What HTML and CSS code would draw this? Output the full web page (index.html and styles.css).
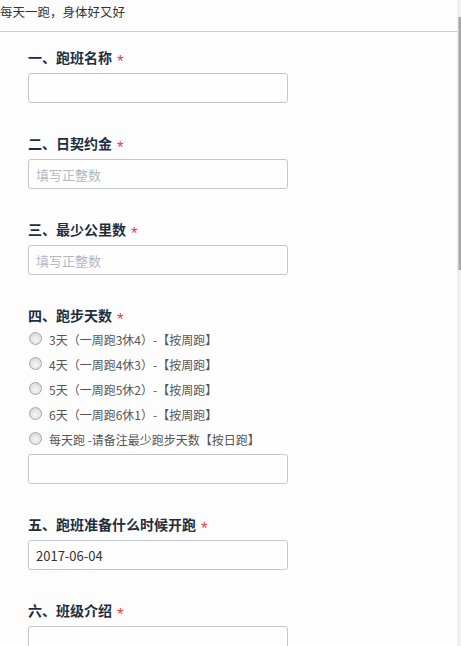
FILE: index.html
```html
<!DOCTYPE html>
<html lang="zh-CN">
<head>
<meta charset="utf-8">
<title>每天一跑</title>
<link rel="stylesheet" href="styles.css">
</head>
<body>
<div class="page">
  <header class="topbar">每天一跑，身体好又好</header>
  <form class="form">
    <div class="field">
      <div class="field-label">一、跑班名称<span class="req">*</span></div>
      <input class="text-input" type="text">
    </div>
    <div class="field">
      <div class="field-label">二、日契约金<span class="req">*</span></div>
      <input class="text-input" type="text" placeholder="填写正整数">
    </div>
    <div class="field">
      <div class="field-label">三、最少公里数<span class="req">*</span></div>
      <input class="text-input" type="text" placeholder="填写正整数">
    </div>
    <div class="field field--choice">
      <div class="field-label">四、跑步天数<span class="req">*</span></div>
      <div class="options">
        <label class="option"><input class="radio" type="radio" name="days"><span>3天（一周跑3休4）-【按周跑】</span></label>
        <label class="option"><input class="radio" type="radio" name="days"><span>4天（一周跑4休3）-【按周跑】</span></label>
        <label class="option"><input class="radio" type="radio" name="days"><span>5天（一周跑5休2）-【按周跑】</span></label>
        <label class="option"><input class="radio" type="radio" name="days"><span>6天（一周跑6休1）-【按周跑】</span></label>
        <label class="option"><input class="radio" type="radio" name="days"><span>每天跑 -请备注最少跑步天数【按日跑】</span></label>
      </div>
      <input class="text-input" type="text">
    </div>
    <div class="field">
      <div class="field-label">五、跑班准备什么时候开跑<span class="req">*</span></div>
      <input class="text-input" type="text" value="2017-06-04">
    </div>
    <div class="field">
      <div class="field-label">六、班级介绍<span class="req">*</span></div>
      <textarea class="text-area"></textarea>
    </div>
  </form>
  <div class="scrollbar" aria-hidden="true"><div class="scrollbar-thumb"></div></div>
</div>
</body>
</html>
```
FILE: styles.css
```css
html {
  background: #fdfdfd;
}
body {
  margin: 0;
  font-family: "Noto Sans CJK SC", "Noto Sans", sans-serif;
  color: #333;
}
.page {
  overflow: hidden;
}
.topbar {
  height: 31px;
  line-height: 23px;
  font-size: 12.5px;
  color: #333;
  border-bottom: 1px solid #c7cbd4;
  white-space: nowrap;
}
.form {
  padding: 15px 0 0 28px;
}
.field {
  margin-bottom: 30px;
}
.field-label {
  height: 20px;
  font-size: 14px;
  font-weight: bold;
  line-height: 20px;
  color: #1f2d3d;
  margin-bottom: 6px;
}
.req {
  color: #f23c3c;
  font-family: "Liberation Sans", sans-serif;
  font-size: 17px;
  line-height: 0;
  font-weight: normal;
  margin-left: 5px;
  vertical-align: -4px;
}
.field--choice .field-label {
  margin-bottom: 2px;
}
.options {
  display: flex;
  flex-direction: column;
  margin-bottom: 2px;
}
.option {
  display: flex;
  align-items: center;
  height: 25px;
  font-size: 12px;
  color: #555;
}
.radio {
  appearance: none;
  -webkit-appearance: none;
  width: 13px;
  height: 13px;
  margin: -3px 7px 0 1px;
  border: 1px solid #a8a8a8;
  border-radius: 50%;
  background: radial-gradient(circle at 50% 60%, #f6f6f6 0%, #e4e4e4 50%, #cdcdcd 100%);
  box-sizing: border-box;
  flex: none;
}
.text-input,
.text-area {
  display: block;
  box-sizing: border-box;
  width: 260px;
  height: 30px;
  padding: 0 7px;
  margin: 0;
  border: 1px solid #c3c7d0;
  border-radius: 3px;
  background: #fefefe;
  font-family: "Noto Sans CJK SC", "Noto Sans", sans-serif;
  font-size: 13px;
  color: #333;
  outline: none;
}
.text-input::placeholder {
  color: #b2b7c0;
}
.text-area {
  height: 90px;
  padding: 6px 7px;
  resize: none;
}
.scrollbar {
  position: fixed;
  top: 0;
  right: 0;
  bottom: 0;
  width: 4px;
  background: #f0f0f0;
  padding-top: 17px;
  box-sizing: border-box;
}
.scrollbar-thumb {
  height: 253px;
  margin-left: 1px;
  background: #a9a9a9;
  border-left: 1px solid #c4c4c4;
}
```
